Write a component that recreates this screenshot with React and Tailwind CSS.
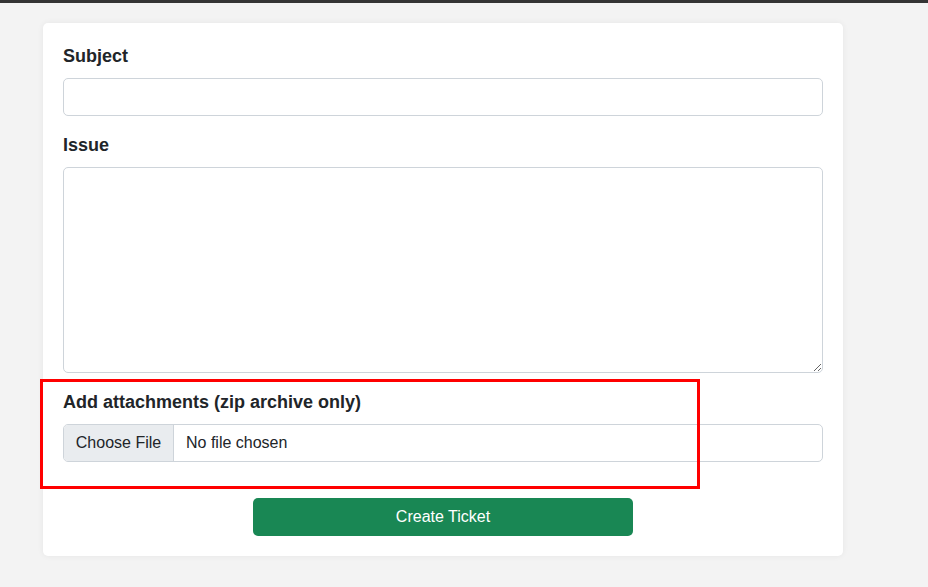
export default function App() {
  return (
    <div className="min-h-[587px] bg-[#f3f3f3] relative" style={{ fontFamily: "'Liberation Sans', Arial, sans-serif" }}>
      {/* top bar */}
      <div className="h-[3px] bg-[#343434]" />

      <div className="pt-[20px] pl-[43px]">
        <div className="w-[800px] bg-white rounded-[5px] shadow-[0_0_6px_rgba(0,0,0,0.06)] p-[20px] text-[#212529]">
          <label className="block text-[18px] leading-[27px] font-bold mb-2">Subject</label>
          <input type="text" className="block w-full h-[38px] border border-[#ced4da] rounded-[5px] px-3 text-[16px] outline-none mb-4" />

          <label className="block text-[18px] leading-[27px] font-bold mb-2">Issue</label>
          <textarea className="block w-full h-[206px] border border-[#ced4da] rounded-[5px] px-3 py-1.5 text-[16px] outline-none mb-4" />

          <label className="block text-[18px] leading-[27px] font-bold mb-2">Add attachments (zip archive only)</label>
          <div className="flex h-[38px] border border-[#ced4da] rounded-[5px] overflow-hidden text-[16px]">
            <div className="w-[110px] bg-[#e9ecef] border-r border-[#ced4da] flex items-center justify-center">Choose File</div>
            <div className="flex items-center pl-3">No file chosen</div>
          </div>

          <div className="flex justify-center mt-[36px]">
            <button className="w-[380px] h-[38px] bg-[#198754] text-white text-[16px] rounded-[5px]">Create Ticket</button>
          </div>
        </div>
      </div>

      {/* annotation highlight */}
      <div className="absolute left-[40px] top-[379px] w-[660px] h-[110px] border-[3px] border-[#ff0000]" />
    </div>
  );
}
